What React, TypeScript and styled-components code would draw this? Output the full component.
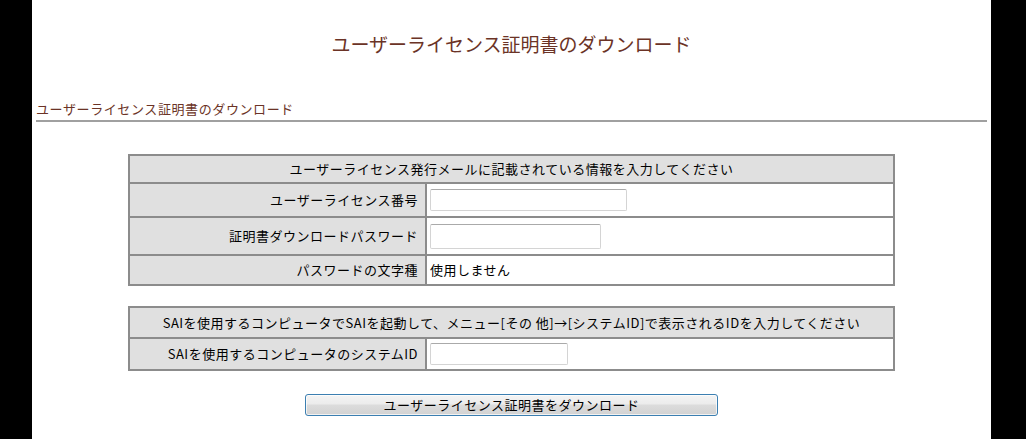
import React from "react";
import styled, { createGlobalStyle } from "styled-components";

const GlobalStyle = createGlobalStyle`
  html, body {
    margin: 0;
    padding: 0;
    background: #000;
  }
  body {
    font-family: "Noto Sans CJK JP", "Liberation Sans", sans-serif;
    font-size: 13px;
    color: #000;
  }
`;

const Page = styled.div`
  margin-left: 32px;
  width: 959px;
  min-height: 100vh;
  background: #fff;
  box-sizing: border-box;
  padding-bottom: 20px;
`;

const Title = styled.h1`
  margin: 0;
  padding-top: 31px;
  font-size: 19px;
  line-height: 26px;
  font-weight: normal;
  text-align: center;
  color: #6b3326;
`;

const SubTitle = styled.h2`
  margin: 44px 0 0;
  padding-left: 4px;
  font-size: 13px;
  line-height: 16px;
  font-weight: normal;
  letter-spacing: 0.6px;
  color: #6b3326;
`;

const Rule = styled.hr`
  margin: 3px 4px 0;
  height: 2px;
  border: none;
  background: #a0a0a0;
`;

const FormTable = styled.div<{ $top: number }>`
  width: 767px;
  box-sizing: border-box;
  margin: ${(p) => p.$top}px 0 0 96px;
  border: 2px solid #8c8c8c;
  letter-spacing: 0.5px;
`;

const HeaderRow = styled.div<{ $h: number }>`
  height: ${(p) => p.$h}px;
  background: #e0e0e0;
  display: flex;
  align-items: center;
  justify-content: center;
  line-height: 16px;
`;

const Row = styled.div<{ $h: number }>`
  box-sizing: border-box;
  display: grid;
  grid-template-columns: 297px 1fr;
  height: ${(p) => p.$h}px;
  border-top: 2px solid #8c8c8c;
`;

const LabelCell = styled.div`
  box-sizing: border-box;
  background: #e0e0e0;
  border-right: 2px solid #8c8c8c;
  display: flex;
  align-items: center;
  justify-content: flex-end;
  padding-right: 7px;
  line-height: 16px;
`;

const ValueCell = styled.div`
  display: flex;
  align-items: center;
  padding-left: 3px;
  line-height: 16px;
  background: #fff;
`;

const TextInput = styled.input<{ $w: number; $h: number }>`
  box-sizing: border-box;
  width: ${(p) => p.$w}px;
  height: ${(p) => p.$h}px;
  margin: 0;
  padding: 1px 3px;
  border: 1px solid #d4d4d4;
  border-top-color: #aaaaaa;
  border-radius: 2px;
  background: #fff;
  font-family: inherit;
  font-size: 13px;
  outline: none;
`;

const ButtonRow = styled.div`
  display: flex;
  justify-content: center;
  margin-top: 23px;
`;

const DownloadButton = styled.button`
  box-sizing: border-box;
  width: 413px;
  height: 22px;
  margin: 0;
  padding: 0;
  border: 1px solid #3c7fb1;
  border-radius: 3px;
  background: linear-gradient(#f4f4f4 0%, #ececec 45%, #dcdcdc 50%, #d2d2d2 100%);
  box-shadow: inset 0 0 0 1px rgba(255, 255, 255, 0.7);
  font-family: "Noto Sans CJK JP", "Liberation Sans", sans-serif;
  font-size: 13px;
  line-height: 18px;
  letter-spacing: 0.5px;
  color: #000;
  cursor: pointer;
`;

export default function App() {
  return (
    <>
      <GlobalStyle />
      <Page>
        <Title>ユーザーライセンス証明書のダウンロード</Title>
        <SubTitle>ユーザーライセンス証明書のダウンロード</SubTitle>
        <Rule />

        <FormTable $top={32}>
          <HeaderRow $h={26}>
            ユーザーライセンス発行メールに記載されている情報を入力してください
          </HeaderRow>
          <Row $h={34}>
            <LabelCell>ユーザーライセンス番号</LabelCell>
            <ValueCell>
              <TextInput type="text" $w={197} $h={22} />
            </ValueCell>
          </Row>
          <Row $h={38}>
            <LabelCell>証明書ダウンロードパスワード</LabelCell>
            <ValueCell>
              <TextInput type="password" $w={171} $h={25} />
            </ValueCell>
          </Row>
          <Row $h={30}>
            <LabelCell>パスワードの文字種</LabelCell>
            <ValueCell>使用しません</ValueCell>
          </Row>
        </FormTable>

        <FormTable $top={20}>
          <HeaderRow $h={29}>
            SAIを使用するコンピュータでSAIを起動して、メニュー[その 他]→[システムID]で表示されるIDを入力してください
          </HeaderRow>
          <Row $h={32}>
            <LabelCell>SAIを使用するコンピュータのシステムID</LabelCell>
            <ValueCell>
              <TextInput type="text" $w={138} $h={22} />
            </ValueCell>
          </Row>
        </FormTable>

        <ButtonRow>
          <DownloadButton type="button">ユーザーライセンス証明書をダウンロード</DownloadButton>
        </ButtonRow>
      </Page>
    </>
  );
}
